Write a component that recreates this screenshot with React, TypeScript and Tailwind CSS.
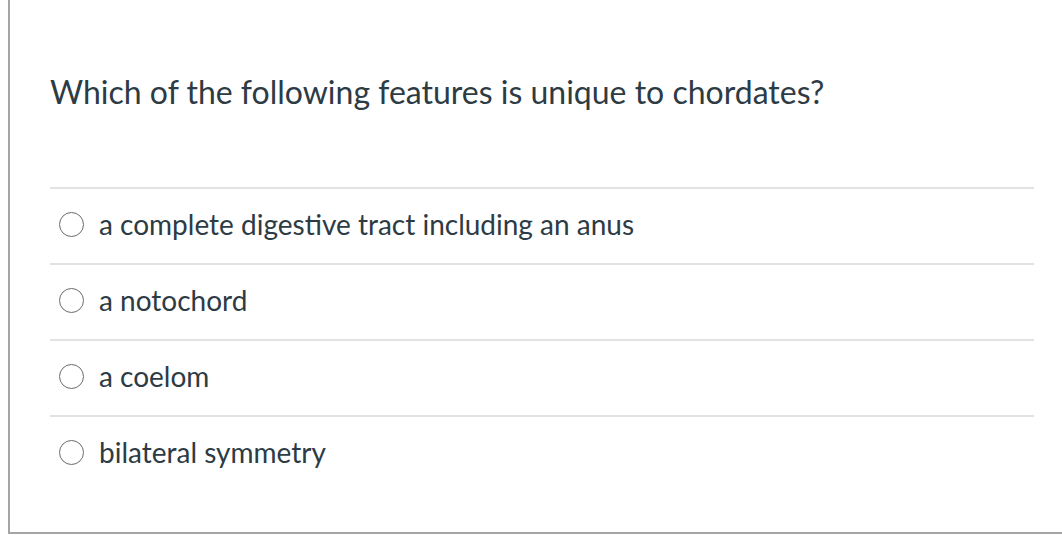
export default function App() {
  const options = [
    'a complete digestive tract including an anus',
    'a notochord',
    'a coelom',
    'bilateral symmetry',
  ];

  return (
    <div className="h-[538px] w-[1062px] bg-white" style={{ fontFamily: 'Lato, "Open Sans", sans-serif' }}>
      <div className="ml-2 h-[534px] border-b-2 border-l-2 border-[#a5a5a5] pl-[40px] pr-[28px] text-[#2d3b45]">
        <div className="flex h-[187px] items-start pt-[72px] text-[32px] leading-[40px]">
          Which of the following features is unique to chordates?
        </div>
        <div>
          {options.map((o) => (
            <div key={o} className="flex h-[76px] items-center gap-[15px] border-t-2 border-[#e2e2e2] pb-[4px] pl-[9px]">
              <span className="h-[25px] w-[25px] rounded-full border-[1.5px] border-[#6b6b6b]" />
              <span className="text-[28px] leading-[32px]">{o}</span>
            </div>
          ))}
        </div>
      </div>
    </div>
  );
}
